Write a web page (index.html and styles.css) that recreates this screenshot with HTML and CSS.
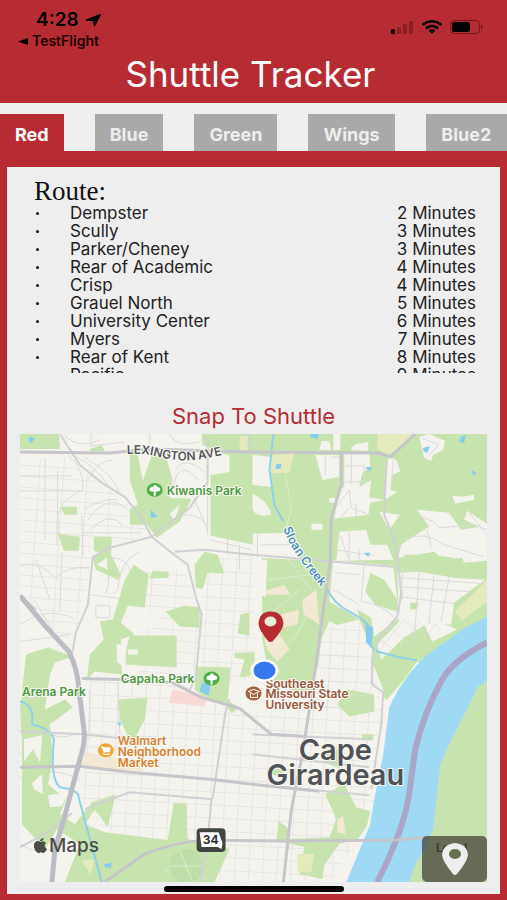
FILE: index.html
```html
<!DOCTYPE html>
<html lang="en">
<head>
    <meta charset="UTF-8">
    <meta name="viewport" content="width=device-width, initial-scale=1.0">
    <title>Shuttle Tracker</title>
    <link rel="stylesheet" href="styles.css">
</head>
<body>
    <header class="header">
        <div class="status-bar">
            <div class="status-left">
                <div class="status-time">
                    <span>4:28</span>
                    <svg width="16" height="13" viewBox="0 0 16 13"><path d="M15 0 Q16 0 16 1 L10 12 Q9 13 9 12 L8 7 L1 7 Q0 6 1 5.500 Z"/></svg>
                </div>
                <a class="back-link" href="#">
                    <svg width="10" height="7" viewBox="0 0 10 7"><path d="M0 3.500 L10 0 V7 Z"/></svg>
                    <span>TestFlight</span>
                </a>
            </div>
            <div class="status-icons">
                <svg width="24" height="14" viewBox="0 0 24 14">
                    <rect x="1" y="9" width="4" height="5" rx="1.500"/>
                    <g opacity=".25">
                        <rect x="7" y="7" width="4" height="7" rx="1"/>
                        <rect x="13" y="4" width="4" height="10" rx="1"/>
                        <rect x="19" y="1" width="4" height="13" rx="1"/>
                    </g>
                </svg>
                <svg width="22" height="14" viewBox="0 0 22 14">
                    <g fill="none" stroke="#000" stroke-width="2.600">
                        <path d="M1.500 5 Q11 -2.500 20.500 5"/>
                        <path d="M5 8.500 Q11 3.500 17 8.500"/>
                    </g>
                    <path d="M7.500 10.500 Q11 8 14.500 10.500 L11 14 Z"/>
                </svg>
                <svg width="33" height="14" viewBox="0 0 33 14">
                    <rect x=".5" y=".5" width="29" height="13" rx="4" fill="none" stroke="#000" stroke-opacity=".4"/>
                    <rect x="2" y="2" width="18" height="10" rx="2.500"/>
                    <path d="M31 4.500 Q34 7 31 9.500 Z" opacity=".5"/>
                </svg>
            </div>
        </div>
        <h1 class="title">Shuttle Tracker</h1>
    </header>

    <nav class="tabs">
        <button class="tab tab-active" type="button">Red</button>
        <button class="tab" type="button">Blue</button>
        <button class="tab" type="button">Green</button>
        <button class="tab" type="button">Wings</button>
        <button class="tab" type="button">Blue2</button>
    </nav>

    <main class="panel">
        <section class="route">
            <h2 class="route-title">Route:</h2>
            <ul class="stops">
                <li class="stop"><span class="stop-name">Dempster</span><span>2 Minutes</span></li>
                <li class="stop"><span class="stop-name">Scully</span><span>3 Minutes</span></li>
                <li class="stop"><span class="stop-name">Parker/Cheney</span><span>3 Minutes</span></li>
                <li class="stop"><span class="stop-name">Rear of Academic</span><span>4 Minutes</span></li>
                <li class="stop"><span class="stop-name">Crisp</span><span>4 Minutes</span></li>
                <li class="stop"><span class="stop-name">Grauel North</span><span>5 Minutes</span></li>
                <li class="stop"><span class="stop-name">University Center</span><span>6 Minutes</span></li>
                <li class="stop"><span class="stop-name">Myers</span><span>7 Minutes</span></li>
                <li class="stop"><span class="stop-name">Rear of Kent</span><span>8 Minutes</span></li>
                <li class="stop"><span class="stop-name">Pacific</span><span>9 Minutes</span></li>
            </ul>
        </section>

        <button class="snap" type="button">Snap To Shuttle</button>

        <div class="map">
            <svg class="map-canvas" viewBox="20 434 468 449">
                <defs>
                    <pattern id="blocks" width="14" height="13" patternUnits="userSpaceOnUse" patternTransform="rotate(3)">
                        <path class="street" d="M0 0 H14 M0 0 V13"/>
                    </pattern>
                    <pattern id="blocks-wide" width="24" height="11" patternUnits="userSpaceOnUse" patternTransform="rotate(4)">
                        <path class="street" d="M0 0 H24 M0 0 V11"/>
                    </pattern>
                    <pattern id="blocks-tilt" width="15" height="14" patternUnits="userSpaceOnUse" patternTransform="rotate(-52)">
                        <path class="street" d="M0 0 H15 M0 0 V14"/>
                    </pattern>
                    <path id="lexington" d="M127 454 Q143 453 155 456 Q180 463 202 459 Q215 457 240 451"/>
                    <path id="creek" d="M284 529 Q292 553 326 592"/>
                </defs>

                <rect class="land" x="20" y="434" width="468" height="449"/>

                <!-- street grids -->
                <path fill="url(#blocks-wide)" d="M20 458 L68 458 L100 485 L128 500 L150 535 L92 555 L85 600 L72 650 L20 596 Z"/>
                <path fill="url(#blocks-wide)" d="M148 570 L185 570 L200 610 L197 680 L140 680 L130 630 Z"/>
                <path fill="url(#blocks)" d="M203 560 L253 555 L258 680 L200 685 Z"/>
                <path fill="url(#blocks)" d="M90 682 L170 682 L230 705 L260 712 L385 712 L372 820 L345 883 L215 883 L212 840 L110 840 L80 800 L88 730 Z"/>
                <path fill="url(#blocks)" d="M320 625 L372 645 L378 712 L312 712 Z"/>
                <g class="street">
                    <path d="M69 456 Q85 470 83 490 M76 457 Q95 465 110 488 M84 457 Q116 475 120 495 M20 476 H72 M20 491 H82 M45 458 V540 M58 470 L57 545 M88 480 Q98 460 113 460"/>
                    <path d="M83 490 Q60 500 58 515 V535 M85 510 Q100 498 118 500 M88 520 Q110 490 130 512 M90 530 Q112 510 122 526 M82 515 L83 556 M83 533 H142"/>
                    <path d="M65 436 Q80 450 100 440 M91 434 V446 L124 442 M170 434 Q176 448 200 442 M150 434 V447 M176 470 Q185 455 205 472 M174 485 Q180 458 198 480 M172 492 L205 490 M208 455 V535 M190 490 Q200 510 208 530 M165 525 Q190 505 207 525"/>
                    <path d="M20 566 Q40 560 55 578 Q70 565 90 568 M36 560 L50 600 M62 553 L60 610 M20 625 Q50 605 75 620 M20 642 L70 635 M34 600 L55 635"/>
                    <path d="M98 560 Q115 575 106 594 M112 558 Q138 560 128 590 M140 552 Q120 560 118 590 L112 595 M96 606 H110 V618 H96 Z M90 595 L130 600"/>
                    <path d="M20 778 Q50 765 80 780 M22 820 Q50 830 60 810 M20 845 Q40 858 56 848 M35 715 Q48 745 75 735 M20 754 L40 745"/>
                    <path d="M210 540 L252 550 M228 520 V555 M240 545 V570"/>
                </g>

                <!-- parks and woods -->
                <path class="park" d="M20 434 H59 L60 449 H20 Z M90 449 L102 445 L105 451 H90 Z"/>
                <path class="park" d="M130 454 L138 454 L143 481 L152 456 L166 456 L173 480 L170 498 L192 499 L180 522 L157 538 L147 525 L130 525 V509 L138 505 L130 480 Z"/>
                <path class="park" d="M60 507 H77 V515 H65 Z M58 534 L80 537 L79 551 H64 Z M94 537 H112 L111 557 L94 551 Z"/>
                <path class="park" d="M202 434 H488 V617 L465 630 L430 655 L405 680 L394 705 L375 690 L372 640 L330 622 L322 640 L315 700 L270 680 L263 640 L262 555 L254 545 L240 542 L211 536 V475 L230 472 V456 L215 450 L203 445 Z"/>
                <path class="park" d="M93 556 L110 552 L121 575 L118 580 L96 570 Z M134 565 L149 575 L145 608 L128 606 L121 623 L135 635 L121 640 L122 675 L95 672 L87 680 L90 655 L104 640 L100 622 L113 620 L125 580 Z"/>
                <path class="park" d="M153 571 L169 572 V578 L150 579 Z M166 612 L185 606 L200 608 V628 L180 627 Z M195 565 L205 552 L218 555 L225 574 L208 573 L203 589 L196 588 Z"/>
                <path class="park" d="M130 636 H177 V668 L125 665 L127 648 Z M196 667 L231 668 L228 704 L210 702 L195 690 Z M241 615 L250 613 V636 L238 634 Z M235 653 H255 V675 L240 678 L245 660 L235 658 Z"/>
                <path class="park" d="M26 655 L48 648 L73 657 L55 663 L50 675 L45 710 L65 700 L73 708 L50 725 L53 760 L48 785 L66 800 L60 815 L75 825 L92 803 L116 795 L108 828 L95 810 L85 825 L105 833 L168 841 L174 804 L187 804 L188 840 L230 850 L215 883 L65 883 L80 845 L57 830 L45 850 L22 825 V745 L20 710 Z"/>
                <path class="park" d="M119 700 L148 698 L145 720 L132 745 L120 720 Z M222 698 L240 708 L232 714 Z M268 770 H285 V778 L272 775 Z M323 750 H340 V769 L327 764 Z M363 735 H374 V741 H363 Z M326 795 L345 785 L357 808 L371 812 L365 838 L340 845 L325 866 L323 880 L300 875 L305 848 L277 842 L279 822 L288 828 L290 840 L330 838 L337 820 Z"/>
                <path class="meadow" d="M378 434 H414 L391 457 L378 448 Z M271 455 L295 453 L290 473 L272 473 Z M456 612 L488 580 V602 L463 621 Z M240 436 H248 V452 H240 Z M298 855 H315 L312 873 H298 Z M82 862 L95 860 L91 876 Z"/>
                <path class="campus" d="M263 592 L285 585 L291 595 H264 Z M303 600 L317 590 L320 625 L304 615 Z M281 615 L300 610 L298 625 L282 628 Z M265 640 L280 635 L290 650 L278 662 L268 650 Z M338 820 L344 817 L346 835 L338 833 Z"/>
                <path class="campus" d="M85 752 L120 760 L143 762 V772 L82 768 Z"/>
                <path class="hospital" d="M173 690 L207 697 L206 707 L169 703 Z"/>

                <!-- cleared lots inside the woods -->
                <g class="land">
                    <path d="M253 455 L271 457 L272 487 L253 485 Z M253 494 Q268 500 272 515 Q258 518 253 510 Z M253 534 L292 533 L301 560 L254 558 Z M253 560 L268 560 L266 597 L255 595 Z"/>
                    <path d="M316 455 L340 455 V477 L323 480 Z M322 441 L330 441 L332 450 L320 450 Z M334 434 H341 V450 H334 Z M345 453 L370 452 L371 468 L363 473 L360 487 L372 480 L370 498 L386 500 L371 503 L369 515 L335 519 L340 489 L345 487 Z M352 447 L357 444 L369 442 V451 L352 450 Z M312 524 H323 V530 H312 Z M330 498 H336 V503 H330 Z"/>
                    <path d="M389 457 L397 460 L401 471 L393 475 L391 490 L398 492 L386 500 Z M420 437 L430 434 L446 441 L444 450 L434 455 L432 461 L425 458 Z M453 496 L464 497 L475 495 L475 500 L456 504 Z"/>
                    <path d="M418 510 L450 513 L462 530 L481 527 L465 520 L468 511 L488 524 V561 L465 563 L463 558 L445 560 L435 552 L399 558 L402 545 L420 533 L430 527 Z M380 512 L401 515 L390 530 Z M340 532 L367 530 L371 545 L388 545 L394 560 L337 561 Z"/>
                    <path d="M334 560 L394 566 L398 600 L405 615 L375 637 L372 618 L358 610 L361 620 L330 602 Z M398 573 L420 572 L455 578 L486 580 L455 603 L452 625 L430 623 L405 638 L382 660 L378 645 L400 622 Z M425 625 L440 622 L458 630 L433 642 Z"/>
                    <path d="M145 610 L165 620 V628 L130 630 Z M117 645 H126 V670 L117 662 Z M128 650 H138 V655 H128 Z M97 565 L107 558 L108 570 Z M175 520 L180 505 L170 514 Z M212 460 L224 456 L225 465 L217 470 Z M24 740 L42 736 L40 763 L33 750 L24 762 Z M32 784 L42 775 L43 795 L34 790 Z M48 796 L68 793 L62 807 L50 808 Z"/>
                    <path d="M327 628 L360 620 L373 650 L370 655 H321 Z M340 660 L370 655 L384 690 L386 712 L350 710 L342 690 Z M314 670 L330 660 L332 680 L315 690 Z"/>
                </g>
                <path class="park" d="M371 573 L385 580 L398 600 L401 613 L376 605 L366 592 Z M348 690 L375 695 V712 L350 717 L338 705 Z M411 603 H420 L417 610 H411 Z M405 555 H418 V565 H405 Z M440 556 L455 558 L450 573 Z"/>
                <path fill="url(#blocks-tilt)" d="M398 620 L450 626 L382 660 L378 645 Z"/>
                <path fill="url(#blocks)" d="M320 628 L360 622 L371 655 L384 712 L314 712 Z"/>
                <g class="street">
                    <path d="M346 466 H365 V482 H346 M352 453 V484 M337 507 L350 490 L352 508 L370 515 M350 508 L340 519 M357 503 V517 M340 535 L350 560 M350 532 V558 M360 550 V561 M337 550 L375 556 M326 452 V475 M332 457 H340 M258 534 V558 M262 545 H296"/>
                    <path d="M421 517 Q435 520 440 528 L475 525 L488 530 M405 540 Q425 530 445 545 L485 557 M470 513 L488 535 M423 438 L440 445 L430 455 M394 460 L392 490 M428 530 L432 548"/>
                    <path d="M400 578 L485 584 M400 587 L470 592 M400 597 L455 604 M420 573 L415 640 M435 575 L430 622 M450 578 L442 622 M403 566 V600 M365 562 L362 602 M335 573 L360 575 M362 602 Q385 605 397 620 M334 590 L360 605"/>
                    <path d="M25 700 L70 690 M90 690 V740 M118 683 L120 735"/>
                </g>
                <path class="path-line" d="M286 475 L292 510 L286 530 M268 580 L312 575 M275 655 Q300 640 310 610 M270 615 L300 590 M285 555 Q300 575 312 590 M165 872 L200 865 M183 855 L190 883 M175 862 L205 880"/>
                <circle cx="187" cy="867" r="17" fill="#b5dba0" opacity=".6"/>
                <path class="path-line" d="M170 867 H205 M180 852 L193 882"/>

                <!-- creeks, ponds, river -->
                <path class="creek" d="M274 434 L270 470 L275 505 L284 522 M327 588 Q335 605 350 612 Q370 622 373 633 Q366 645 378 652 Q398 658 418 661"/>
                <path class="creek" d="M20 702 Q35 705 32 725 Q52 730 54 740 Q50 780 60 788 Q75 790 78 795 L90 840 L102 883"/>
                <path class="water" d="M366 624 L374 628 L372 648 L367 643 Z M30 436 L35 439 L31 443 L28 440 Z M151 510 L158 517 L151 518 Z M277 464 H282 L281 469 H276 Z M311 434 H320 L318 439 L311 437 Z M424 448 L431 446 L428 453 L424 451 Z M462 437 L467 435 L465 443 L460 442 Z M367 467 H372 V471 L367 469 Z M472 470 L478 473 L474 475 Z M365 553 H371 L369 557 Z M202 684 L212 680 L209 696 L200 692 Z M117 723 L122 723 L120 727 Z M104 865 L112 864 L111 869 L105 868 Z"/>
                <path class="park" d="M488 617 H470 L400 700 L360 883 H488 Z"/>
                <path class="land" d="M418 662 L405 680 L388 700 L372 820 L330 883 H360 L400 710 L425 665 Z"/>
                <path class="river" d="M488 617 L465 629 L430 654 Q405 675 390 708 Q386 740 384 755 L375 800 L371 825 L347 883 H410 Q418 858 425 852 L434 830 L441 765 Q454 735 468 710 L478 688 L488 682 Z"/>
                <path class="ferry" d="M488 643 Q454 660 442 682 Q425 713 416 750 L410 795 Q405 830 378 883"/>

                <!-- secondary roads -->
                <path class="road" d="M60 434 L80 465 L102 483 L125 497 L140 515 L152 537 Q170 552 188 565 L197 600 L202 615 L196 680 L190 690 M152 537 L110 548 L93 557 L88 605 L76 633 L72 655 M152 537 L190 508 L208 482 V436 M175 552 L205 550 L253 555 L394 567"/>
                <path class="road" d="M20 732 L83 735 L130 740 M85 810 L130 793 L213 800 M213 800 L226 712 L230 700 M72 814 L45 835 L20 848 M212 800 L207 850 L201 883 M250 434 V450 M387 462 L385 515 L397 545 L402 595 L398 617 L380 638 L373 660 L373 685 L384 693 L382 725 L372 790 M253 755 L370 768 M253 785 L370 796 M253 735 L372 740 M20 596 L36 610"/>
                <path class="road main" d="M20 452 L110 453 L150 449 L250 452 L379 453 L391 457 L416 434 M342 453 V485 L332 518 L331 560 L322 625 L313 690 L303 755 L292 810 L284 883"/>
                <path class="road main" d="M82 679 L120 680 L172 683 L202 698 L240 709 L272 735 L304 737 M20 768 L80 767 L130 773 L210 780 L253 785 L320 792 M105 883 L145 855 Q175 843 205 841 L290 842 L397 841 L430 838"/>
                <path class="highway" d="M20 596 L45 626 L69 652 Q78 670 79 690 L84 730 Q86 742 80 760 L64 820 L55 850 L52 883"/>

                <!-- labels -->
                <text class="label label-road"><textPath href="#lexington">LEXINGTON AVE</textPath></text>
                <text class="label label-water"><textPath href="#creek">Sloan Creek</textPath></text>
                <g class="label label-park">
                    <text x="167" y="495">Kiwanis Park</text>
                    <text x="121" y="684">Capaha Park</text>
                    <text x="22" y="697">Arena Park</text>
                </g>
                <g>
                    <ellipse cx="155" cy="490" rx="8" ry="7" fill="#4fae48"/>
                    <path fill="#fff" d="M150 491 Q149 487 153 487 Q155 483 158 487 Q162 488 160 491 L156 492 V496 H154 V492 Z"/>
                    <ellipse cx="212" cy="679" rx="8" ry="7" fill="#4fae48"/>
                    <path fill="#fff" d="M207 680 Q206 676 210 676 Q212 672 215 676 Q219 677 217 680 L213 681 V685 H211 V681 Z"/>
                </g>
                <g class="label label-school">
                    <text x="266" y="689">Southeast</text>
                    <text x="266" y="699">Missouri State</text>
                    <text x="266" y="710">University</text>
                </g>
                <ellipse cx="254" cy="694" rx="8" ry="7" fill="#a56245"/>
                <path fill="none" stroke="#fff" d="M249 692 L254 690 L260 692 L254 695 Z M251 694 V698 H258 V694"/>
                <g class="label label-shop">
                    <text x="118" y="746">Walmart</text>
                    <text x="118" y="757">Neighborhood</text>
                    <text x="118" y="768">Market</text>
                </g>
                <ellipse cx="106" cy="751" rx="8" ry="7" fill="#f2a634"/>
                <path fill="#fff" d="M101 747 H103 L104 748 H111 L110 753 H104 Z"/>
                <path fill="none" stroke="#fff" d="M104 753 L104 755 H110"/>
                <g class="label label-city">
                    <text x="336" y="761">Cape</text>
                    <text x="336" y="786">Girardeau</text>
                </g>

                <rect x="197" y="829" width="29" height="24" rx="4" fill="#414542"/>
                <path fill="#fff" d="M200 833 H219 L223 844 L222 850 L218 848 H202 Z"/>
                <text class="label-shield" x="211" y="845">34</text>

                <g fill="#4b4d4b">
                    <path d="M41 843 Q44 841 46 844 Q43 847 47 850 Q44 856 41 853 Q38 856 35 851 Q32 844 37 842 Q39 842 41 843 Z M40 842 Q40 839 44 839 Q43 842 40 842 Z"/>
                    <text class="label-maps" x="49" y="853">Maps</text>
                </g>
                <text class="label-legal" x="437" y="853">Legal</text>

                <!-- shuttle and user position -->
                <path fill="#b92b33" d="M271 612 Q283 612 284 624 Q284 630 273 642 Q271 643 269 642 Q259 630 259 624 Q260 612 271 612 Z"/>
                <ellipse cx="271" cy="622" rx="6" ry="5" fill="#e8ecd6"/>
                <ellipse cx="265" cy="671" rx="14" ry="11" fill="#fff"/>
                <ellipse cx="265" cy="671" rx="11" ry="9" fill="#3778ed"/>
            </svg>
            <button class="locate" type="button" aria-label="Locate">
                <svg width="26" height="33" viewBox="0 0 26 33">
                    <path fill="#eee" d="M13 0 Q25 1 26 12 Q25 19 15 31 Q13 33 11 31 Q1 19 0 12 Q1 1 13 0 Z"/>
                    <ellipse cx="13" cy="11" rx="6" ry="5" fill="#66704f"/>
                </svg>
            </button>
        </div>
    </main>

    <div class="home-indicator"></div>
</body>
</html>
```

FILE: styles.css
```css
* {
    box-sizing: border-box;
}

body {
    position: relative;
    margin: 0;
    padding-bottom: 6px;
    background: #b72b33;
    color: #222;
    font-family: Inter, "Liberation Sans", sans-serif;
    overflow-x: hidden;
}

button {
    border: none;
    padding: 0;
    font-family: inherit;
    cursor: pointer;
}

.header {
    height: 103px;
    padding: 8px 24px 0 18px;
    background: #b72b33;
}

.status-bar {
    display: flex;
    justify-content: space-between;
    height: 42px;
    color: #000;
}

.status-time {
    display: flex;
    align-items: center;
    gap: 6px;
    padding-left: 18px;
    font-size: 19px;
    font-weight: 600;
    line-height: 24px;
}

.back-link {
    display: flex;
    align-items: center;
    gap: 4px;
    color: #1a0000;
    font-size: 14px;
    font-weight: 600;
    line-height: 18px;
    text-decoration: none;
}

.status-icons {
    display: flex;
    align-items: flex-start;
    gap: 7px;
    padding-top: 12px;
}

.title {
    margin: 0;
    color: #fff;
    font-size: 35px;
    font-weight: 400;
    line-height: 48px;
    text-align: center;
}

.tabs {
    display: flex;
    gap: 31px;
    padding-top: 11px;
    background: #eee;
    overflow: hidden;
}

.tab {
    flex-shrink: 0;
    height: 37px;
    padding: 3px 15px 0;
    background: #a9a9a9;
    color: #eee;
    font-size: 18px;
    font-weight: 700;
}

.tab:last-child {
    flex-grow: 1;
}

.tab-active {
    background: #b72b33;
    color: #fff;
}

.panel {
    margin: 16px 7px 0;
    padding: 12px 13px 12px;
    background: #eee;
}

.route {
    height: 194px;
    padding: 0 11px 0 14px;
    overflow: hidden;
}

.route-title {
    margin: 0;
    color: #111;
    font-family: "Liberation Serif", serif;
    font-size: 27px;
    font-weight: 400;
    line-height: 25px;
}

.stops {
    margin: 0;
    padding: 0;
    list-style: none;
}

.stop {
    display: flex;
    align-items: center;
    font-size: 17px;
    line-height: 18px;
}

.stop::before {
    content: "";
    width: 3px;
    height: 3px;
    margin: 0 31px 0 2px;
    border-radius: 50%;
    background: #111;
}

.stop-name {
    flex: 1;
}

.snap {
    display: block;
    margin: 25px auto 0;
    background: none;
    color: #b72b33;
    font-size: 22px;
    line-height: 36px;
}

.map {
    position: relative;
}

.map-canvas {
    display: block;
    width: 100%;
    height: auto;
}

.land { fill: #f5f3ed; }
.park { fill: #c8e4ae; }
.meadow { fill: #e5eabc; }
.campus { fill: #f3e8d3; }
.hospital { fill: #f7d9d6; }
.water { fill: #85cdee; }
.river { fill: #9edaf3; }

.street {
    fill: none;
    stroke: #dadadd;
    stroke-width: 1;
}

.path-line {
    fill: none;
    stroke: #dcebcf;
    stroke-width: 1;
}

.creek {
    fill: none;
    stroke: #8ed2e8;
    stroke-width: 2;
}

.ferry {
    fill: none;
    stroke: #a9a6c8;
    stroke-width: 6;
}

.road {
    fill: none;
    stroke: #d0d0d5;
    stroke-width: 2;
    stroke-linejoin: round;
}

.main {
    stroke: #c5c5ca;
    stroke-width: 3;
}

.highway {
    fill: none;
    stroke: #bcbcc4;
    stroke-width: 5;
    stroke-linejoin: round;
}

.label {
    font-size: 12px;
    font-weight: 600;
    paint-order: stroke;
    stroke: #f8f7f2;
    stroke-width: 2px;
    stroke-linejoin: round;
}

.label-road { fill: #55575a; }
.label-water { fill: #4b8fc0; }
.label-park { fill: #4c9a45; }
.label-school { fill: #96583f; }
.label-shop { fill: #d9822f; }

.label-city {
    fill: #505255;
    font-size: 29px;
    text-anchor: middle;
}

.label-shield {
    fill: #333;
    font-size: 12px;
    font-weight: 700;
    text-anchor: middle;
}

.label-maps {
    font-size: 19px;
    font-weight: 500;
}

.label-legal {
    fill: #333;
    font-size: 12px;
    font-weight: 600;
}

.locate {
    position: absolute;
    right: 0;
    bottom: 0;
    display: flex;
    align-items: center;
    justify-content: center;
    width: 65px;
    height: 46px;
    border-radius: 5px;
    background: rgba(62, 60, 50, 0.72);
}

.home-indicator {
    position: absolute;
    bottom: 8px;
    left: 50%;
    width: 180px;
    height: 6px;
    margin-left: -90px;
    border-radius: 3px;
    background: #000;
}
```
